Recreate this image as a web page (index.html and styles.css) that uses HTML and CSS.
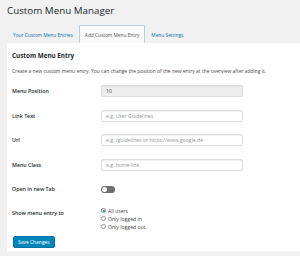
FILE: index.html
```html
<!DOCTYPE html>
<html lang="en">
<head>
    <meta charset="UTF-8">
    <title>Custom Menu Manager</title>
    <link rel="stylesheet" href="styles.css">
</head>
<body>
    <div class="wrap">
        <h1>Custom Menu Manager</h1>

        <div class="tabs">
            <a class="tab">Your Custom Menu Entries</a>
            <a class="tab active">Add Custom Menu Entry</a>
            <a class="tab">Menu Settings</a>
        </div>

        <div class="panel">
            <h2>Custom Menu Entry</h2>
            <p class="desc">Create a new custom menu entry. You can change the position of the new entry at the overview after adding it.</p>

            <div class="row">
                <label>Menu Position</label>
                <div class="input disabled">10</div>
            </div>
            <div class="row">
                <label>Link Text</label>
                <div class="input placeholder">e.g. User Guidelines</div>
            </div>
            <div class="row">
                <label>Url</label>
                <div class="input placeholder">e.g. /guidelines or https://www.google.de</div>
            </div>
            <div class="row">
                <label>Menu Class</label>
                <div class="input placeholder">e.g. home-link</div>
            </div>
            <div class="row">
                <label>Open in new Tab</label>
                <div class="toggle"><span class="knob"></span></div>
            </div>
            <div class="row top">
                <label>Show menu entry to</label>
                <div class="radios">
                    <div class="radio"><span class="dot checked"></span>All users</div>
                    <div class="radio"><span class="dot"></span>Only logged in</div>
                    <div class="radio"><span class="dot"></span>Only logged out</div>
                </div>
            </div>

            <button class="save">Save Changes</button>
        </div>
    </div>
</body>
</html>
```

FILE: styles.css
```css
body {
    margin: 0;
    background: #f1f1f1;
    font-family: 'Open Sans', sans-serif;
    color: #444;
    overflow: hidden;
}

.wrap {
    padding-left: 7px;
}

h1 {
    font-size: 9.8px;
    font-weight: 400;
    line-height: 13px;
    color: #23282d;
    margin: 4px 0 0;
}

.tabs {
    display: flex;
    margin-top: 8px;
    height: 18px;
}

.tab {
    display: flex;
    align-items: center;
    padding: 0 5px;
    font-size: 4.8px;
    color: #0073aa;
    border: 1px solid transparent;
    border-bottom: none;
}

.tab.active {
    color: #555;
    background: #fafafa;
    border-color: #b9d1e4;
    border-radius: 1px 1px 0 0;
}

.panel {
    background: #fff;
    padding: 8px 5px 3px;
    box-shadow: 0 1px 1px rgba(0,0,0,0.08);
}

h2 {
    font-size: 6.3px;
    font-weight: 700;
    color: #23282d;
    line-height: 10px;
    margin: 0;
}

.desc {
    font-size: 4.95px;
    line-height: 8px;
    margin: 6px 0 4px;
}

.row {
    display: grid;
    grid-template-columns: 89px 142px;
    align-items: center;
    height: 24.5px;
}

.row label {
    font-size: 5.3px;
    font-weight: 600;
    color: #23282d;
}

.input {
    height: 12px;
    box-sizing: border-box;
    border: 1px solid #ddd;
    border-radius: 2px;
    box-shadow: inset 0 1px 1px rgba(0,0,0,0.06);
    font-size: 5.1px;
    line-height: 10px;
    padding: 0 4px;
    color: #32373c;
    white-space: nowrap;
    overflow: hidden;
}

.input.disabled {
    background: #eee;
}

.input.placeholder {
    color: #8f9398;
}

.toggle {
    width: 14px;
    height: 7px;
    border-radius: 4px;
    background: #6f6f6f;
    position: relative;
}

.knob {
    position: absolute;
    left: 1px;
    top: 1px;
    width: 5px;
    height: 5px;
    border-radius: 50%;
    background: #fff;
}

.row.top {
    height: 29px;
    align-items: start;
    padding-top: 5px;
}

.row.top label {
    margin-top: 2px;
}

.radios {
    display: flex;
    flex-direction: column;
}

.radio {
    display: flex;
    align-items: center;
    gap: 2px;
    font-size: 5.1px;
    line-height: 8px;
    color: #444;
}

.dot {
    width: 5px;
    height: 5px;
    box-sizing: border-box;
    border: 1px solid #9a9a9a;
    border-radius: 50%;
    position: relative;
}

.dot.checked {
    border-color: #7e8993;
}

.dot.checked::after {
    content: '';
    position: absolute;
    left: 0.5px;
    top: 0.5px;
    width: 2px;
    height: 2px;
    border-radius: 50%;
    background: #1e8cbe;
}

.save {
    display: block;
    margin: 0 0 0 1px;
    height: 12px;
    padding: 0 4px;
    font-family: 'Open Sans', sans-serif;
    font-size: 4.95px;
    color: #fff;
    background: #0085ba;
    border: 1px solid #0073aa;
    border-radius: 2px;
}
```
